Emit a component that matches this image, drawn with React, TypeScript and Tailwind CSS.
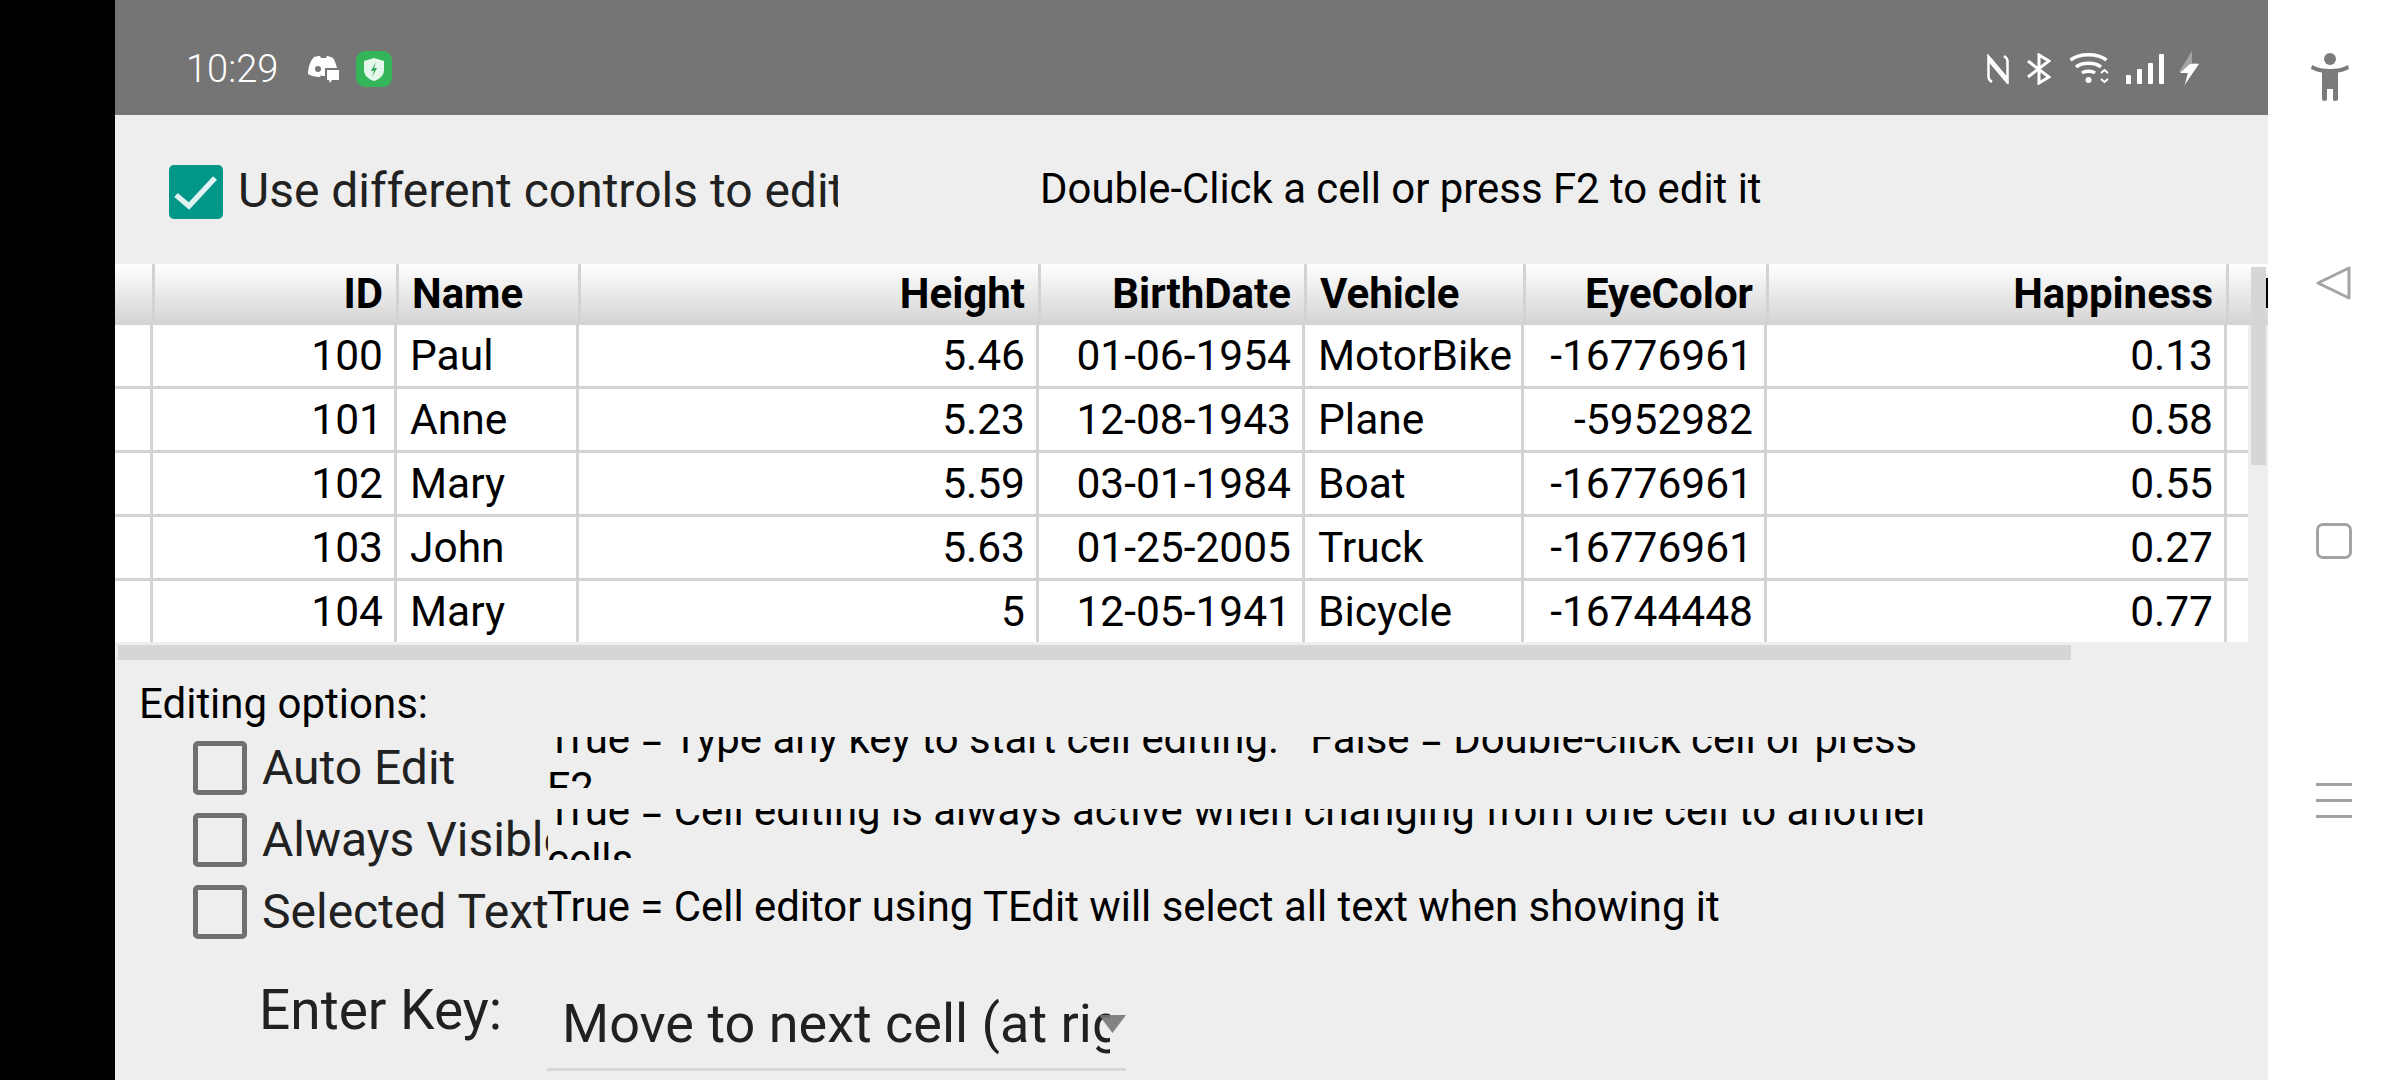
import React from 'react';

const font = "font-['Roboto',sans-serif]";

const columns = [
  { title: 'ID', width: 'w-[244px]', right: true },
  { title: 'Name', width: 'w-[182px]', right: false },
  { title: 'Height', width: 'w-[460px]', right: true },
  { title: 'BirthDate', width: 'w-[266px]', right: true },
  { title: 'Vehicle', width: 'w-[219px]', right: false },
  { title: 'EyeColor', width: 'w-[243px]', right: true },
  { title: 'Happiness', width: 'w-[460px]', right: true },
];

const rows = [
  ['100', 'Paul', '5.46', '01-06-1954', 'MotorBike', '-16776961', '0.13'],
  ['101', 'Anne', '5.23', '12-08-1943', 'Plane', '-5952982', '0.58'],
  ['102', 'Mary', '5.59', '03-01-1984', 'Boat', '-16776961', '0.55'],
  ['103', 'John', '5.63', '01-25-2005', 'Truck', '-16776961', '0.27'],
  ['104', 'Mary', '5', '12-05-1941', 'Bicycle', '-16744448', '0.77'],
];

const options = [
  { label: 'Auto Edit', text: 'True = Type any key to start cell editing.   False = Double-click cell or press F2' },
  { label: 'Always Visible', text: 'True = Cell editing is always active when changing from one cell to another cells' },
  { label: 'Selected Text', text: 'True = Cell editor using TEdit will select all text when showing it' },
];

const StatusBar = () => (
  <div className="h-[115px] shrink-0 bg-[#757575] flex items-center pl-[71px] pr-[69px] pt-[23px] text-white">
    <span className="text-[38px] font-light w-[121px]">10:29</span>
    {/* discord + chat */}
    <svg width="32" height="28" viewBox="0 0 32 28" className="mt-[2px]">
      <path fill="#fff" d="M7 1c3-1 5-1 6-1l1 2h5l1-2c2 0 4 1 6 2 2 3 3 6 4 10H20v8h-5l-1-1-1 2c-5 0-9-1-12-3C1 12 3 5 7 1z" />
      <circle cx="11" cy="13" r="3" fill="#757575" />
      <path fill="#fff" d="M20 14h12v10h-7l-2 3-1-3h-2z" />
      <path fill="#757575" d="M18 12h2v14h-2z" />
    </svg>
    <svg width="36" height="36" viewBox="0 0 36 36" className="ml-[17px]">
      <rect width="36" height="36" rx="9" fill="#34b55a" />
      <path fill="#e4f7ea" d="M18 7l10 3v9c0 5-4 9-10 11-6-2-10-6-10-11v-9z" />
      <path fill="#2ea653" d="M20 11l-5 9h3l-2 6 5-9h-3z" />
    </svg>
    <div className="flex-1" />
    <div className="flex items-center">
      {/* nfc */}
      <svg width="22" height="30" viewBox="0 0 22 30" fill="none" stroke="#fff" strokeWidth="2.500">
        <path d="M5 28C2 26 1.500 25 1.500 23V2.500L20.500 25" />
        <path d="M17 2c3 2 3.500 3 3.500 5v21.500L1.500 6" />
      </svg>
      <svg width="24" height="32" viewBox="0 0 24 32" fill="none" stroke="#fff" strokeWidth="3" className="ml-[18px]">
        <path d="M1 8l21 16-10 6V2l10 6L1 24" />
      </svg>
      <svg width="42" height="32" viewBox="0 0 42 32" fill="none" stroke="#fff" strokeWidth="3.500" className="ml-[18px]">
        <path d="M1.500 7c9-7 27-7 36 0" />
        <path d="M7 14c6-5 19-5 25 0" />
        <path d="M13 20c3-2.500 10-2.500 13 0" />
        <circle cx="19.500" cy="27" r="3" fill="#fff" stroke="none" />
        <path strokeWidth="2" d="M32 20l3.500-3 3.500 3M32 26l3.500 3 3.500-3" />
      </svg>
      <svg width="38" height="30" viewBox="0 0 38 30" className="ml-[15px]" fill="#fff">
        <rect x="0" y="21" width="5" height="9" rx="1" />
        <rect x="11" y="15" width="5" height="15" rx="1" />
        <rect x="22" y="9" width="5" height="21" rx="1" />
        <rect x="33" y="0" width="5" height="30" rx="1" />
      </svg>
      <svg width="20" height="36" viewBox="0 0 20 36" className="ml-[15px]">
        <path fill="#fff" d="M13 12h7L5 36l4-15H0L13 0z" opacity="0.35" />
        <path fill="#fff" d="M11 13h9L6 33l3-11H1z" />
      </svg>
    </div>
  </div>
);

const GridTable = () => (
  <div className="relative h-[378px] shrink-0 overflow-hidden">
    <div className="flex h-[61px] w-[2153px] bg-gradient-to-b from-white to-[#d3d3d3] text-[42px] font-bold text-black leading-[60px]">
      <div className="w-[40px] shrink-0 border-r-[3px] border-[#d3d3d3]" />
      {columns.map((c) => (
        <div
          key={c.title}
          className={`${c.width} shrink-0 px-[13px] border-r-[3px] border-[#d3d3d3] whitespace-nowrap overflow-hidden ${c.right ? 'text-right' : 'text-left'}`}
        >
          {c.title}
        </div>
      ))}
      <div className="pl-[34px] whitespace-nowrap">BMI</div>
    </div>
    <div className="w-[2133px] h-[317px] bg-white overflow-hidden text-[42.5px] text-black leading-[62px]">
      {rows.map((r) => (
        <div key={r[0]} className="flex h-[64px] border-b-[3px] border-[#d3d3d3]">
          <div className="w-[38px] shrink-0 border-r-[3px] border-[#d3d3d3]" />
          {r.map((v, i) => (
            <div
              key={i}
              className={`${columns[i].width} shrink-0 pl-[13px] pr-[11px] border-r-[3px] border-[#d3d3d3] whitespace-nowrap overflow-hidden ${columns[i].right ? 'text-right' : 'text-left'}`}
            >
              {v}
            </div>
          ))}
        </div>
      ))}
    </div>
    {/* vertical scroller */}
    <div className="absolute left-[2136px] top-[3px] w-[15px] h-[198px] bg-[#d6d6d6]" />
  </div>
);

const Options = () => (
  <div className="flex flex-col">
    {options.map((o) => (
      <div key={o.label} className="flex items-center h-[72px] pl-[78px]">
        <div className="w-[54px] h-[54px] shrink-0 rounded-[5px] border-[5px] border-[#707070]" />
        <div className="w-[301px] pl-[15px] shrink-0 overflow-hidden whitespace-nowrap text-[48px] text-[#212121]">
          {o.label}
        </div>
        <div className="w-[1385px] h-[51px] mb-[11px] overflow-hidden flex items-center -ml-[1px] shrink-0">
          <div className="text-[41.9px] leading-[49px] text-black whitespace-pre-wrap">{o.text}</div>
        </div>
      </div>
    ))}
  </div>
);

const NavBar = () => (
  <div className="w-[132px] shrink-0 h-full bg-white flex flex-col items-center pt-[53px]">
    <svg width="38" height="48" viewBox="0 0 38 48" fill="#7b7b7b" className="-translate-x-[4px]">
      <circle cx="19" cy="6" r="6" />
      <path d="M1 12c6 3 11 4 18 4s12-1 18-4l1 4c-3 1.500-7 3-11 3.500V46c0 1-1 2-3 2s-2-1-2-2V36h-6v10c0 1-1 2-2 2-2 0-3-1-3-2V19.500C7 19 3 17.500 0 16z" />
    </svg>
    <svg width="36" height="36" viewBox="0 0 36 36" fill="none" stroke="#a3a3a3" strokeWidth="3" strokeLinejoin="round" className="mt-[164px]">
      <path d="M33 3v30L2 18z" />
    </svg>
    <div className="mt-[222px] w-[36px] h-[36px] rounded-[7px] border-[3px] border-[#a3a3a3]" />
    <div className="mt-[224px] w-[36px] flex flex-col gap-[13px]">
      <div className="h-[3px] bg-[#a3a3a3]" />
      <div className="h-[3px] bg-[#a3a3a3]" />
      <div className="h-[3px] bg-[#a3a3a3]" />
    </div>
  </div>
);

export default function App() {
  return (
    <div className={`${font} flex w-[2400px] h-[1080px] overflow-hidden bg-black`}>
      <div className="w-[115px] shrink-0 bg-black" />
      <div className="w-[2153px] shrink-0 flex flex-col bg-[#eeeeee]">
        <StatusBar />
        {/* top options row */}
        <div className="h-[149px] shrink-0 flex pl-[54px] pt-[50px]">
          <div className="w-[54px] h-[54px] rounded-[5px] bg-[#009688] shrink-0">
            <svg width="54" height="54" viewBox="0 0 54 54" fill="none" stroke="#e0f2f1" strokeWidth="5.500">
              <path d="M7 30l13 11L46 13" />
            </svg>
          </div>
          <div className="w-[615px] pl-[15px] shrink-0 overflow-hidden whitespace-nowrap text-[48px] leading-[52px] text-[#212121]">
            Use different controls to edit
          </div>
          <div className="ml-[202px] text-[41.9px] leading-[47px] text-black whitespace-nowrap">
            Double-Click a cell or press F2 to edit it
          </div>
        </div>
        <GridTable />
        <div className="h-[18px] shrink-0 pl-[3px] pt-[3px]">
          <div className="w-[1953px] h-[15px] bg-[#d6d6d6]" />
        </div>
        <div className="pl-[24px] pt-[19px] h-[72px] text-[42px] leading-[50px] text-black shrink-0">Editing options:</div>
        <Options />
        <div className="flex h-[132px] pl-[144px]">
          <div className="w-[288px] pt-[32px] text-[55px] leading-[60px] text-[#212121] whitespace-nowrap">Enter Key:</div>
          <div className="relative w-[579px] h-[86px] mt-[37px] border-b-[3px] border-[#d6d6d6] pt-[8px] pl-[15px] shrink-0">
            <div className="w-[548px] overflow-hidden whitespace-nowrap text-[54px] leading-[62px] text-[#212121]">
              Move to next cell (at right)
            </div>
            <svg width="27" height="18" viewBox="0 0 27 18" className="absolute right-0 top-[30px]">
              <path d="M0 0h27L13.500 18z" fill="#757575" fillOpacity="0.9" />
            </svg>
          </div>
        </div>
      </div>
      <NavBar />
    </div>
  );
}
